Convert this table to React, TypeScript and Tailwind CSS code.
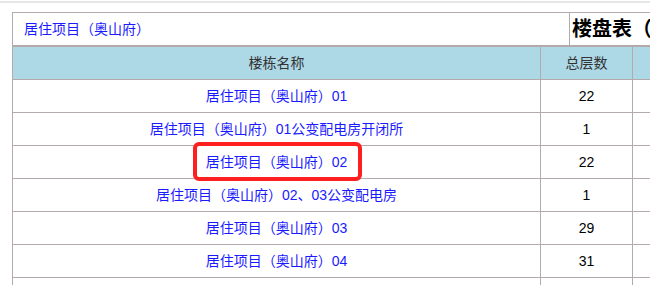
const rows = [
  { name: '居住项目（奥山府）01', floors: '22' },
  { name: '居住项目（奥山府）01公变配电房开闭所', floors: '1' },
  { name: '居住项目（奥山府）02', floors: '22' },
  { name: '居住项目（奥山府）02、03公变配电房', floors: '1' },
  { name: '居住项目（奥山府）03', floors: '29' },
  { name: '居住项目（奥山府）04', floors: '31' },
  { name: '', floors: '' },
]

export default function App() {
  return (
    <div className="relative w-[650px] h-[285px] overflow-hidden bg-white text-[14px] font-['Liberation_Sans','Noto_Sans_CJK_SC',sans-serif]">
      <div className="mt-px h-[2px] bg-[#e6e6e6]" />
      <div className="ml-[12px] mt-[9px] w-[720px]">
        <div className="flex h-[34px] border-y border-l border-[#b4aaaa]">
          <div className="w-[557px] border-r border-[#b4aaaa] pl-[11px] flex items-center text-[#1a1aff]">居住项目（奥山府）</div>
          <div className="flex-1 pl-[2px] flex items-center text-[20px] font-bold text-black">楼盘表（</div>
        </div>
        <div className="border-t border-l border-[#b4aaaa]">
          <div className="flex h-[33px] border-b border-[#b4aaaa] bg-[#add8e6] text-[#333]">
            <div className="w-[528px] border-r border-[#b4aaaa] flex items-center justify-center">楼栋名称</div>
            <div className="w-[92px] border-r border-[#b4aaaa] flex items-center justify-center">总层数</div>
            <div className="w-[92px] border-r border-[#b4aaaa]" />
          </div>
          {rows.map((r, i) => (
            <div key={i} className="flex h-[33px] border-b border-[#b4aaaa]">
              <div className="w-[528px] border-r border-[#b4aaaa] flex items-center justify-center text-[#1a1aff]">{r.name}</div>
              <div className="w-[92px] border-r border-[#b4aaaa] flex items-center justify-center text-black">{r.floors}</div>
              <div className="w-[92px] border-r border-[#b4aaaa]" />
            </div>
          ))}
        </div>
      </div>
      <div className="absolute left-[193px] top-[142px] w-[169px] h-[39px] border-4 border-[#fe2020] rounded-[6px]" />
    </div>
  )
}
